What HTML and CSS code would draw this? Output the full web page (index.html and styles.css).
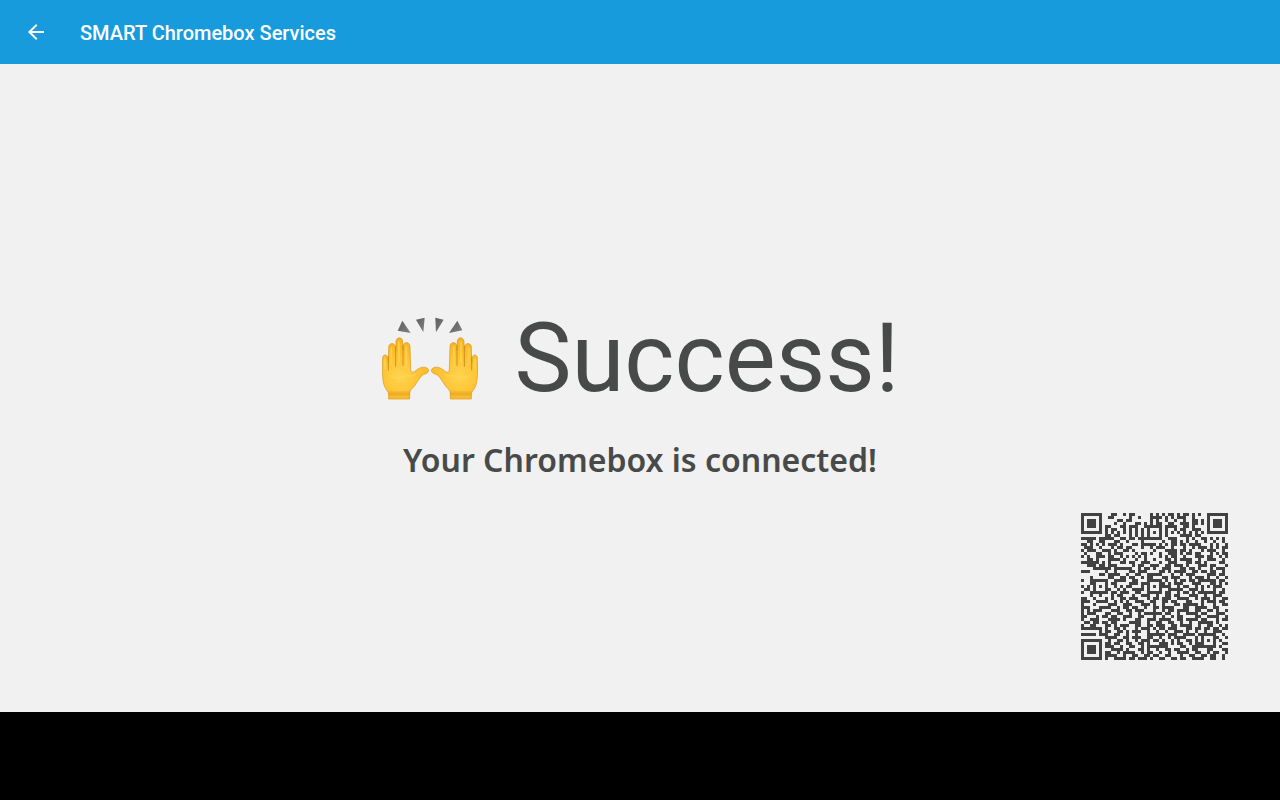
FILE: index.html
```html
<!doctype html>
<html lang="en">
<head>
	<meta charset="utf-8">
	<title>SMART Chromebox Services</title>
	<link rel="stylesheet" href="styles.css">
</head>
<body>
	<header class="toolbar">
		<button class="back" type="button" aria-label="Back">
			<svg viewBox="0 0 24 24" width="24" height="24"><path d="M20 11H7.83l5.59-5.59L12 4l-8 8 8 8 1.41-1.41L7.83 13H20v-2z"/></svg>
		</button>
		<span class="title">SMART Chromebox Services</span>
	</header>

	<main class="content">
		<div class="message">
			<h1>
				<svg class="hands" viewBox="27 33 300 252" role="img" aria-label="Raised hands">
					<defs>
						<radialGradient id="skin" gradientUnits="userSpaceOnUse" cx="88" cy="215" r="120">
							<stop offset="0" stop-color="#ffd34f"/>
							<stop offset="0.5" stop-color="#fdc332"/>
							<stop offset="1" stop-color="#f5b120"/>
						</radialGradient>
						<linearGradient id="wrist" x1="0" y1="0" x2="0" y2="1">
							<stop offset="0" stop-color="#d98a10" stop-opacity="0"/>
							<stop offset="0.45" stop-color="#d98a10" stop-opacity="0.45"/>
							<stop offset="1" stop-color="#f5ae20" stop-opacity="0"/>
						</linearGradient>
						<linearGradient id="ray" x1="0" y1="0" x2="1" y2="1">
							<stop offset="0" stop-color="#5c5c5c"/>
							<stop offset="1" stop-color="#828282"/>
						</linearGradient>
						<g id="hand">
							<path class="skin" d="M35 160C34 147 50 147 51 159L52 172L53 127C53 112 73 112 73 127L74 140L75 109C76 95 95 95 95 109L96 136L97 122C98 109 117 110 117 124L119 192C119 203 126 204 133 198C144 188 157 184 166 188C176 192 174 203 164 206C148 210 143 226 131 242C120 254 116 258 116 267V282H53V268C53 260 47 258 42 247C33 229 34 198 35 160Z"/>
							<path class="crease" d="M52 156V195M74 124V184M96 122V181"/>
							<path class="shine" d="M42 163V190M61 129V178M84 111V172M106 125V186"/>
							<path class="palm" d="M58 213Q82 225 109 211Q118 215 132 210"/>
							<path fill="url(#wrist)" d="M52 254Q84 261 117 254V282H52Z"/>
						</g>
					</defs>
					<g class="rays">
						<path d="M94 47L80 77L119 84Z"/>
						<path d="M135 44L161 38L157 82Z"/>
						<path d="M193 38L218 44L195 82Z"/>
						<path d="M259 47L274 76L234 84Z"/>
					</g>
					<use href="#hand"/>
					<use href="#hand" transform="translate(354 0) scale(-1 1)"/>
				</svg>
				<span>Success!</span>
			</h1>
			<p>Your Chromebox is connected!</p>
		</div>
		<svg class="qr" viewBox="0 0 49 49" role="img" aria-label="QR code"><path id="modules"/></svg>
	</main>

	<footer class="navbar"></footer>

	<script src="qr.js"></script>
</body>
</html>
```
FILE: styles.css
```css
body {
	margin: 0;
	min-height: 100vh;
	display: flex;
	flex-direction: column;
	background-color: #f1f1f1;
	color: #484a49;
	font-family: Roboto, sans-serif;
}

.toolbar {
	display: flex;
	align-items: center;
	gap: 20px;
	height: 64px;
	padding: 0 12px;
	background-color: #179bdc;
	color: #fff;
}

.back {
	display: flex;
	padding: 12px;
	border: 0;
	background: none;
	color: inherit;
	cursor: pointer;
}

.back svg {
	fill: currentColor;
}

.title {
	font-size: 20px;
	font-weight: 500;
	line-height: 24px;
	padding-top: 2px;
}

/* message and code share one cell, the code sits in its corner */
.content {
	flex: 1;
	display: grid;
}

.message,
.qr {
	grid-area: 1 / 1;
}

.message {
	align-self: center;
	text-align: center;
	padding-top: 8px;
}

h1 {
	display: flex;
	justify-content: center;
	align-items: center;
	gap: 34px;
	margin: 0;
	font-size: 96px;
	font-weight: 400;
	line-height: 112px;
}

.hands {
	width: 100px;
}

.skin {
	fill: url(#skin);
	stroke: #dc9419;
	stroke-width: 2;
}

.crease,
.shine,
.palm {
	fill: none;
	stroke-linecap: round;
}

.crease {
	stroke: #d18f20;
	stroke-width: 3;
}

.shine {
	stroke: #ffd14a;
	stroke-width: 5;
}

.palm {
	stroke: #ffda60;
	stroke-width: 5;
	opacity: 0.5;
}

.rays {
	fill: url(#ray);
}

p {
	margin: 24px 0 0;
	font-family: "Noto Sans", sans-serif;
	font-size: 32px;
	font-weight: 600;
	line-height: 44px;
}

.qr {
	place-self: end;
	width: 147px;
	margin: 52px;
	fill: #424242;
	shape-rendering: crispEdges;
}

.navbar {
	height: 88px;
	background-color: #000;
}
```
FILE: qr.js
```js
// one string per row of the code, # is a dark module
var rows = [
	"#######...##..#.##.....#.#.#.##.#.##.#.#..#######",
	"#.....#..##.....#..#...####.#.#.###..#....#.....#",
	"#.###.#.....##.##......#.#..#..#..#..##.#.#.###.#",
	"#.###.#....#..#...##.#.#.##..##..###.##.#.#.###.#",
	"#.###.#.##...##.###..######.####..##.#....#.###.#",
	"#.....#.#.##..#.#.#.#.#...#.#..#.##..###..#.....#",
	"#######.#.#.#.#.#.#.#.#.#.#.#.#.#.#.#.#.#.#######",
	"........##.##...#.#.#.#...#.#....####.##.........",
	"#####.#####..##.##.########..###...#.#..##.#.#.#.",
	"..##..##...##..#....#......#..##.#.#..#..#..#..#.",
	"##.#.#.#.###.#...##.#####.#.#.##.##.####...#.#..#",
	".###..#...#.##.##...#..#.###..#...#..#.###.#.#.##",
	"#.###..###.#..##.#......#...####.##.#...#.###..#.",
	".#...##..#.###....#.##.#..#..###.#.##.##...#.#.##",
	"#.#..###.##..#.#.#.#.#....#.#.##..#...###.##..#.#",
	"..##.#...####.#...#..#..#...##.#.####..#..###..#.",
	"######.#.#...##.##..###...#..###...##.##.#....##.",
	"..###.##.###.....#.##..###..##.###.#...###.##...#",
	"....######.######..#.##.#..###...##.##.#...#.###.",
	"###.....#..#....##.###....##.#.####..##.##.##..#.",
	"......##.####..#..##..#####...#..#.###....###.##.",
	"...#.....##..##.##..#.##...##.###...#.###.#..#..#",
	"#..######..####..##...#####.#..#.##.##.######.##.",
	"...##...#.##....###.###...##.#.###...###...##.#.#",
	"#.#.#.#.#..#.#.##...#.#.#.####..#.##..#.#.#.###..",
	".##.#...##..#.#..####.#...#..#####..###.#...#..#.",
	"#..######.##.###..##..#####.##..#.##.#.######.##.",
	"...#..#...#.##...#..###..#..##.##...###..#..###..",
	"##..#...#.#..##.###...#.##.###..####..#.###.#..##",
	"###..####..#.#.#..###..##..##.##...##...#.###.##.",
	"#...#....###..###...###.#..#...##.#####.#...#..##",
	"###...####..#.##.##..#..##.####...##..####..##...",
	"#.#.###...###..##.###...#..#.##.####..##..##.#..#",
	"#.###...##..##..#..#.######.##..#..####.##...###.",
	"##...#.##.##..###..##...#..#..#.##....##..####..#",
	"#..###...####.#...##..###.####..##.####.##...#.##",
	".##.##.##.##....####..#..##..##..#..#..#####.#...",
	"#..##...##.#.###..##..##.###..##.####..#..##..#.#",
	"#######.#..##.#...#.###.#.##.###...##.##.##.##.##",
	"......#.##..##.#.###..#..#..#..###.#..#..#..###..",
	"#####.###..##..#..#...######.###..####.######..#.",
	"........####..##.###..##..#..#.####...#.#...##..#",
	"#######..#..##.#..#.###.##.#..#.#..##.#.#.#.#.#..",
	"#.....#.##.##..##..##.#...###.#.##..#.###...#..##",
	"#.###.#.###..#..##..#.#######....##..########.#..",
	"#.###.#...####.#...##.#..#..##.##..#.##...##...##",
	"#.###.#.##..#.####..#.##..#..#..####..##..#.##..#",
	"#.....#.####..#..##..##.##..##...#..##..##.##..#.",
	"#######.#..####.##.###.#..##..##.##..####..##..#."
];

var d = "";
for (var y = 0; y < rows.length; y++) {
	for (var x = 0; x < rows[y].length; x++) {
		if (rows[y][x] === "#") {
			d += "M" + x + " " + y + "h1v1h-1z";
		}
	}
}
document.getElementById("modules").setAttribute("d", d);
```
